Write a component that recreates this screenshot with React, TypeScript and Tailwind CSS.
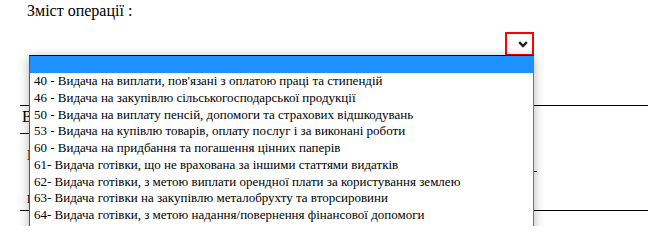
import React from "react";

const options = [
  "",
  "40 - Видача на виплати, пов'язані з оплатою праці та стипендій",
  "46 - Видача на закупівлю сільськогосподарської продукції",
  "50 - Видача на виплату пенсій, допомоги та страхових відшкодувань",
  "53 - Видача на купівлю товарів, оплату послуг і за виконані роботи",
  "60 - Видача на придбання та погашення цінних паперів",
  "61- Видача готівки, що не врахована за іншими статтями видатків",
  "62- Видача готівки, з метою виплати орендної плати за користування землею",
  "63- Видача готівки на закупівлю металобрухту та вторсировини",
  "64- Видача готівки, з метою надання/повернення фінансової допомоги",
];

export default function App() {
  return (
    <div className="relative w-[648px] h-[226px] overflow-hidden bg-white text-black font-[family-name:'Liberation_Serif','Times_New_Roman',serif]">
      <div className="pl-[27px] pt-[2px] h-[20px] text-[16px] leading-[18px]">Зміст операції :</div>

      <div className="flex justify-end pr-[114px] mt-[12px] h-[24px]">
        <div className="w-[29px] h-[24px] border-2 border-[#ff0000] flex items-center justify-end pr-[4px]">
          <svg width="10" height="7" viewBox="0 0 10 7">
            <path d="M1.2 1.2 L5 5 L8.8 1.2" fill="none" stroke="#222" strokeWidth="2.4" />
          </svg>
        </div>
      </div>

      <div className="mt-[49px] ml-[20px] h-0 border-t border-black" />
      <div className="ml-[22px] mt-[2px] h-[18px] text-[16px] leading-[18px]">Видача</div>
      <div className="ml-[20px] mt-[7px] w-[40px] h-0 border-t border-black" />
      <div className="ml-[27px] mt-[13px] h-[18px] text-[14px] leading-[18px]">Підстава</div>
      <div className="ml-[534px] mt-[6px] w-[3px] h-0 border-t border-black" />
      <div className="ml-[27px] mt-[17px] h-[18px] text-[16px] leading-[18px]">ніша</div>
      <div className="mt-[3px] ml-[20px] h-0 border-t border-black" />

      <div className="absolute left-[29px] top-[55px] w-[505px] h-[190px] bg-white border border-[#767676] border-t-black border-l-[#555] shadow-[0_2px_10px_rgba(0,0,0,0.3)]">
        {options.map((o, i) => (
          <div
            key={i}
            className={
              "pl-[4px] text-[13px] whitespace-nowrap " +
              (i === 0 ? "bg-[#1e90ff] h-[17px] leading-[17px]" : "h-[16.75px] leading-[16.75px]")
            }
          >
            {o}
          </div>
        ))}
      </div>
    </div>
  );
}
